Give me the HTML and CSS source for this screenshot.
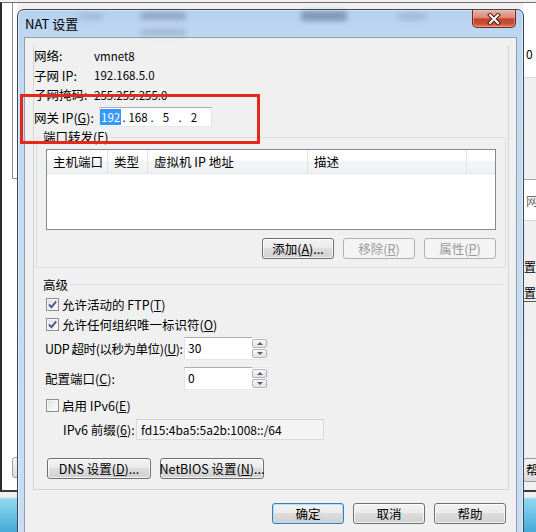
FILE: index.html
```html
<!DOCTYPE html>
<html lang="zh-CN">
<head>
<meta charset="utf-8">
<title>NAT 设置</title>
<link rel="stylesheet" href="styles.css">
</head>
<body>
<div class="bgwin">
  <div class="bg-lwhite"></div>
  <div class="bg-tree"></div>
  <div class="bg-lbtn"></div>
  <div class="bg-rtop"><span class="bg-r0">0</span></div>
  <div class="bg-rbox">网</div>
  <div class="bg-rtxt t1">置(</div>
  <div class="bg-rtxt t2">置(</div>
  <div class="bg-rbtn">帮</div>
</div>

<div class="dialog">
  <div class="titlebar">
    <span class="glass g1"></span>
    <span class="glass g2"></span>
    <span class="glass g3"></span>
    <span class="glass g4"></span>
    <span class="glass g5"></span>
    <span class="title">NAT 设置</span>
    <div class="close">
      <svg width="14" height="12" viewBox="0 0 14 12">
        <path d="M3 2 L11 10 M11 2 L3 10" stroke="#4a1c14" stroke-width="4" stroke-linecap="square" fill="none"/>
        <path d="M3 2 L11 10 M11 2 L3 10" stroke="#ffffff" stroke-width="2" stroke-linecap="square" fill="none"/>
      </svg>
    </div>
  </div>

  <div class="panel">
    <div class="page">
      <div class="info">
        <div class="info-row"><span class="lbl">网络:</span><span class="val">vmnet8</span></div>
        <div class="info-row"><span class="lbl">子网 IP:</span><span class="val">192.168.5.0</span></div>
        <div class="info-row"><span class="lbl">子网掩码:</span><span class="val">255.255.255.0</span></div>
      </div>
      <div class="gw-row">
        <span class="gw-lbl">网关 IP(<u>G</u>):</span>
        <div class="ipbox">
          <span class="oct"><span class="sel">192</span></span><span class="dot">.</span><span class="oct">168</span><span class="dot">.</span><span class="oct">5</span><span class="dot">.</span><span class="oct">2</span>
        </div>
      </div>

      <fieldset class="group">
        <legend class="legend">端口转发(<u>F</u>)</legend>
        <div class="list">
          <div class="list-head">
            <span class="col c1">主机端口</span>
            <span class="col c2">类型</span>
            <span class="col c3">虚拟机 IP 地址</span>
            <span class="col c4">描述</span>
            <span class="col c5"></span>
          </div>
        </div>
        <div class="btnrow">
          <button class="btn w72">添加(<u>A</u>)...</button>
          <button class="btn w72" disabled>移除(<u>R</u>)</button>
          <button class="btn w72" disabled>属性(<u>P</u>)</button>
        </div>
      </fieldset>

      <div class="adv-head"><span>高级</span><span class="rule"></span></div>

      <div class="cb-row first">
        <span class="cb"><svg width="11" height="11" viewBox="0 0 11 11"><path d="M2 5.5 L4.5 8.2 L9.2 2.3" fill="none" stroke="#4b5a8f" stroke-width="1.9"/></svg></span>
        <span>允许活动的 FTP(<u>T</u>)</span>
      </div>
      <div class="cb-row">
        <span class="cb"><svg width="11" height="11" viewBox="0 0 11 11"><path d="M2 5.5 L4.5 8.2 L9.2 2.3" fill="none" stroke="#4b5a8f" stroke-width="1.9"/></svg></span>
        <span>允许任何组织唯一标识符(<u>O</u>)</span>
      </div>

      <div class="field-row udp">
        <span class="f-lbl tight">UDP 超时(以秒为单位)(<u>U</u>):</span>
        <div class="spinbox">
          <span class="spin-text">30</span>
          <span class="spin"><span class="spin-btn"><span class="arr-up"></span></span><span class="spin-btn"><span class="arr-down"></span></span></span>
        </div>
      </div>
      <div class="field-row cfg">
        <span class="f-lbl">配置端口(<u>C</u>):</span>
        <div class="spinbox">
          <span class="spin-text">0</span>
          <span class="spin"><span class="spin-btn"><span class="arr-up"></span></span><span class="spin-btn"><span class="arr-down"></span></span></span>
        </div>
      </div>

      <div class="cb-row v6">
        <span class="cb"></span>
        <span>启用 IPv6(<u>E</u>)</span>
      </div>

      <div class="field-row prefix">
        <span class="p-lbl">IPv6 前缀(<u>6</u>):</span>
        <span class="ro">fd15:4ba5:5a2b:1008::/64</span>
      </div>

      <div class="btnrow2">
        <button class="btn w104">DNS 设置(<u>D</u>)...</button>
        <button class="btn w104">NetBIOS 设置(<u>N</u>)...</button>
      </div>
    </div>

    <div class="footer">
      <button class="btn w72 default">确定</button>
      <button class="btn w72">取消</button>
      <button class="btn w72">帮助</button>
    </div>
  </div>
</div>

<div class="annot"></div>
</body>
</html>
```

FILE: styles.css
```css
* { box-sizing: border-box; }
html, body { margin: 0; padding: 0; }
body {
  width: 536px;
  height: 532px;
  overflow: hidden;
  position: relative;
  font-family: "Noto Sans CJK SC", "Liberation Sans", sans-serif;
  font-size: 12.5px;
  color: #000;
  background: linear-gradient(180deg, #f3eef0 0, #f3eef0 497px, #8fd9ee 499px, #46a9da 532px);
}
u { text-decoration: underline; text-underline-offset: 1px; }

/* background window */
.bgwin {
  position: absolute;
  left: 0; top: 2px;
  width: 536px; height: 490px;
  border-left: 2px solid #2b2b2b;
  border-top: 1px solid #6e6e6e;
  border-bottom: 2px solid #3a3a3a;
  background: #f0f0f0;
}
.bg-lwhite { position: absolute; left: 0; top: 0; width: 15px; height: 487px; background: #fff; }
.bg-tree {
  position: absolute; left: 10px; top: 0;
  width: 6px; height: 176px;
  border-left: 1px solid #8c8c8c;
  border-bottom: 1px solid #8c8c8c;
}
.bg-lbtn {
  position: absolute; left: 10px; top: 454px;
  width: 12px; height: 21px;
  border: 1px solid #a0a0a0; border-radius: 3px;
  background: linear-gradient(#f6f6f6, #dcdcdc);
}
.bg-rtop {
  position: absolute; left: 521px; top: 0;
  width: 20px; height: 75px;
  background: #fff; border-bottom: 1px solid #dadada;
}
.bg-r0 { position: absolute; left: 3px; top: 43px; font-size: 12px; line-height: 16px; }
.bg-rbox {
  position: absolute; left: 521px; top: 176px;
  width: 20px; height: 42px;
  background: #fff;
  border-top: 1px solid #a8a8a8; border-bottom: 1px solid #d8d8d8;
  color: #6a6a6a; font-size: 12px; line-height: 16px;
  padding: 13px 0 0 3px;
  white-space: nowrap;
}
.bg-rtxt { position: absolute; left: 522px; font-size: 12px; line-height: 16px; white-space: nowrap; }
.bg-rtxt.t1 { top: 256px; }
.bg-rtxt.t2 { top: 282px; border-bottom: 1px solid #555; }
.bg-rbtn {
  position: absolute; left: 521px; top: 455px;
  width: 20px; height: 24px;
  border: 1px solid #9a9a9a; border-radius: 3px;
  background: linear-gradient(#f4f4f4, #dadada);
  font-size: 12px; line-height: 22px; padding-left: 2px;
  white-space: nowrap;
}

/* dialog */
.dialog {
  position: absolute;
  left: 17px; top: 9px;
  width: 507px; height: 540px;
  border: 1px solid #3b4654;
  border-radius: 7px 7px 0 0;
  background: linear-gradient(180deg, #b5d0ee 0, #bdd6f1 22px, #c4daf2 80px, #c8ddf3 100%);
  box-shadow: inset 0 0 0 1px rgba(255, 255, 255, 0.45);
  padding: 0 6px;
  display: flex;
  flex-direction: column;
}
.titlebar {
  position: relative;
  height: 27px;
  flex: none;
  display: flex;
  align-items: center;
}
.title { position: relative; margin-left: 1px; line-height: 16px; font-size: 13px; }
.glass {
  position: absolute;
  filter: blur(2.5px);
  background: rgba(70, 85, 110, 0.32);
  border-radius: 4px;
}
.g1 { left: 55px; top: 3px; width: 24px; height: 7px; background: rgba(90, 105, 130, 0.2); }
.g2 { left: 116px; top: 2px; width: 46px; height: 8px; }
.g3 { left: 116px; top: 19px; width: 46px; height: 7px; background: rgba(90, 105, 130, 0.25); }
.g4 { left: 277px; top: 1px; width: 46px; height: 10px; background: rgba(60, 75, 100, 0.42); }
.g5 { left: 373px; top: 3px; width: 30px; height: 7px; background: rgba(90, 105, 130, 0.22); }
.close {
  position: absolute;
  left: 448px; top: 0;
  width: 44px; height: 18px;
  border: 1px solid #6b2a20; border-top: none;
  border-radius: 0 0 5px 5px;
  background: linear-gradient(180deg, #eab0a3 0, #dc8a78 45%, #c5432c 52%, #c94f37 80%, #e17e60 100%);
  box-shadow: inset 0 0 0 1px rgba(255, 220, 210, 0.35);
  display: flex; align-items: center; justify-content: center;
}

.panel {
  flex: 1;
  border: 1px solid #8e9db0;
  background: #f0f0f0;
  display: flex;
  flex-direction: column;
}
.page {
  margin: 7px 7px 0 8px;
  border: 1px solid #d4d4d4;
  border-top: none;
  padding: 1px 0 10px;
}

.info-row { display: flex; align-items: center; height: 19.5px; }
.lbl { width: 60px; flex: none; }
.val { font-size: 11.5px; }
.gw-row { display: flex; align-items: center; height: 22px; margin-top: 1.5px; }
.gw-lbl { width: 65px; flex: none; }
.ipbox {
  width: 113px; height: 20px;
  border: 1px solid #abadb3;
  border-left-color: #e2e3ea; border-bottom-color: #e3e9ef; border-right-color: #dbdfe6;
  background: #fff;
  display: flex; align-items: center;
  font-size: 11.5px; line-height: 14px;
}
.oct { width: 20px; text-align: center; flex: none; }
.dot { width: 8px; text-align: center; flex: none; }
.sel { background: #3399ff; color: #fff; padding: 0 1px; }

.group {
  margin: 1px 2px 0;
  padding: 4px 9px 8px 9px;
  border: 1px solid #d5dfe5;
  border-radius: 3px;
  min-width: 0;
}
.legend { margin-left: -5px; padding: 0 2px; line-height: 16px; }
.list { height: 81px; border: 1px solid #828790; background: #fff; }
.list-head {
  display: flex;
  height: 24px;
  border-bottom: 1px solid #e5e5e5;
  background: linear-gradient(180deg, #fff 0, #fff 45%, #f4f5f7 46%, #f1f2f4 100%);
}
.col { flex: none; padding-left: 6px; line-height: 23px; border-right: 1px solid #e3e4e6; white-space: nowrap; }
.c1 { width: 61px; }
.c2 { width: 40px; }
.c3 { width: 160px; }
.c4 { width: 159px; }
.c5 { flex: 1; border-right: none; }

.btn {
  height: 21px;
  padding: 0;
  border: 1px solid #707070;
  border-radius: 3px;
  background: linear-gradient(180deg, #f3f3f3 0, #ebebeb 45%, #dddddd 50%, #d0d0d0 100%);
  box-shadow: inset 0 0 0 1px rgba(255, 255, 255, 0.75);
  font-family: inherit;
  font-size: 12.5px;
  color: #000;
  display: flex; align-items: center; justify-content: center;
  white-space: nowrap;
}
.btn:disabled { border-color: #adb2b5; background: #f4f4f4; color: #9a9a9a; box-shadow: none; }
.btn.default { border-color: #3c7fb1; box-shadow: inset 0 0 0 1px #b2e0f6; }
.w72 { width: 72px; }
.w104 { width: 104px; }
.btnrow { display: flex; justify-content: flex-end; gap: 9px; margin-top: 8px; }

.adv-head { display: flex; align-items: center; height: 16px; line-height: 16px; margin: 9px 5px 0 9px; }
.rule { flex: 1; height: 1px; background: #d5dfe5; margin: -1px 0 0 2px; }

.cb-row { display: flex; align-items: center; height: 20px; padding-left: 12px; }
.cb-row.first { margin-top: 1px; }
.cb-row.v6 { margin-top: 5px; }
.cb {
  width: 13px; height: 13px;
  flex: none;
  margin-right: 3px;
  border: 1px solid #8e8f8f;
  background: linear-gradient(135deg, #dcdcdc 0, #f0f0f0 50%, #fcfcfc 100%);
  box-shadow: inset 0 0 0 1px #f5f5f5;
  display: flex; align-items: center; justify-content: center;
}

.field-row { display: flex; align-items: center; }
.field-row.udp { height: 23px; margin-top: 3px; padding-left: 11px; }
.field-row.cfg { height: 23px; margin-top: 7px; padding-left: 11px; }
.f-lbl { width: 139px; flex: none; white-space: nowrap; }
.f-lbl.tight { letter-spacing: -0.45px; }
.spinbox { display: flex; width: 84px; height: 23px; }
.spin-text {
  width: 68px;
  border: 1px solid #abadb3;
  border-left-color: #e2e3ea; border-bottom-color: #e3e9ef; border-right: none;
  background: #fff;
  font-size: 12px; line-height: 20px;
  padding-left: 3px;
}
.spin {
  width: 16px;
  display: flex; flex-direction: column; gap: 1px;
  padding: 1px 0;
  background: #fff;
  border: 1px solid #e3e9ef; border-left: none;
}
.spin-btn {
  flex: 1;
  border: 1px solid #b4b4b4;
  border-radius: 2px;
  background: linear-gradient(180deg, #f8f8f8, #e2e2e2);
  display: flex; align-items: center; justify-content: center;
}
.arr-up { width: 0; height: 0; border-left: 3px solid transparent; border-right: 3px solid transparent; border-bottom: 3px solid #55606e; }
.arr-down { width: 0; height: 0; border-left: 3px solid transparent; border-right: 3px solid transparent; border-top: 3px solid #55606e; }

.field-row.prefix { height: 21px; margin-top: 4px; padding-left: 29px; }
.p-lbl { width: 73px; flex: none; white-space: nowrap; }
.ro {
  width: 188px; height: 21px;
  border: 1px solid #dadada;
  border-top-color: #cfcfcf;
  background: #f4f4f4;
  font-size: 12px; line-height: 19px;
  padding-left: 4px;
}

.btnrow2 { display: flex; gap: 9px; margin-top: 18px; padding-left: 13px; }

.footer { display: flex; justify-content: flex-end; gap: 9px; margin-top: 13px; padding-right: 10px; }

/* red annotation rectangle drawn over the screenshot */
.annot {
  position: absolute;
  left: 20px; top: 94px;
  width: 240px; height: 50px;
  border: 3px solid #e2291c;
}
```
